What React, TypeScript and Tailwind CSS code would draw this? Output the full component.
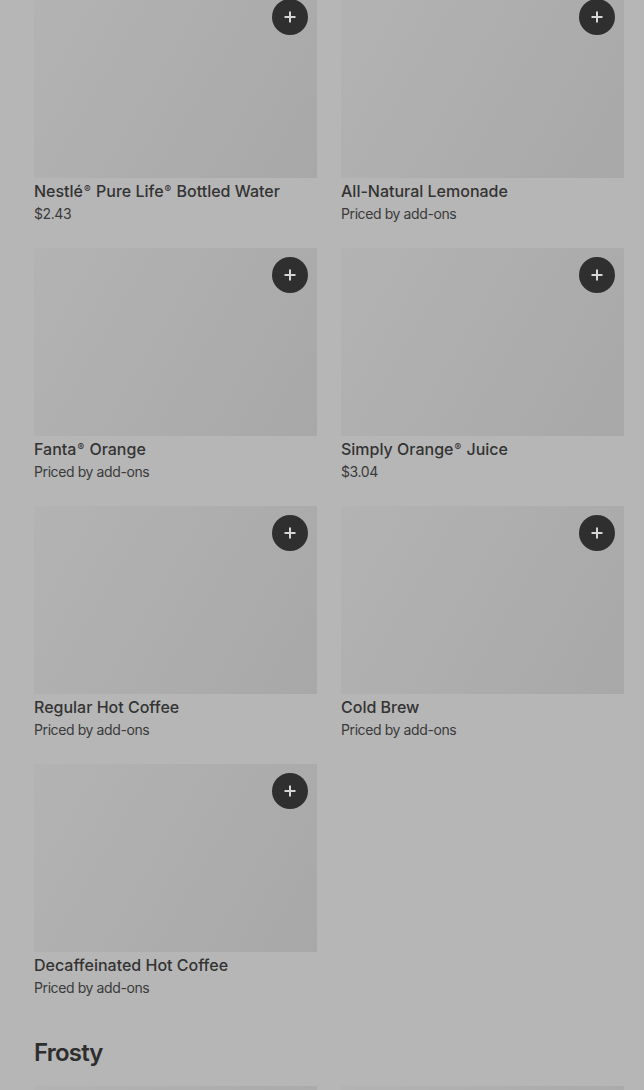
const items = [
  { name: "Nestlé® Pure Life® Bottled Water", price: "$2.43" },
  { name: "All-Natural Lemonade", price: "Priced by add-ons" },
  { name: "Fanta® Orange", price: "Priced by add-ons" },
  { name: "Simply Orange® Juice", price: "$3.04" },
  { name: "Regular Hot Coffee", price: "Priced by add-ons" },
  { name: "Cold Brew", price: "Priced by add-ons" },
  { name: "Decaffeinated Hot Coffee", price: "Priced by add-ons" },
];

function PlusButton() {
  return (
    <button className="absolute right-[9px] top-[9px] flex h-9 w-9 items-center justify-center rounded-full bg-[#2f2f2f] text-[#d6d6d6]">
      <svg width="14" height="14" viewBox="0 0 14 14" fill="none">
        <path d="M7 1.5v11M1.5 7h11" stroke="currentColor" strokeWidth="2" />
      </svg>
    </button>
  );
}

// small raised ® like the reference
function Name({ text }: { text: string }) {
  const parts = text.split("®");
  return (
    <>
      {parts.map((part, i) => (
        <span key={i}>
          {part}
          {i < parts.length - 1 && <span className="relative -top-[4px] px-[1px] text-[10px] leading-none">®</span>}
        </span>
      ))}
    </>
  );
}

function ItemCard({ name, price }: { name: string; price: string }) {
  return (
    <article className="pb-6">
      <div className="relative h-[188px] bg-[linear-gradient(120deg,#b3b3b3,#a8a8a8)]">
        <PlusButton />
      </div>
      <h3 className="mt-[3px] h-5 overflow-hidden text-base font-medium leading-5 tracking-normal text-[#333333]">
        <Name text={name} />
      </h3>
      <p className="mt-[3px] text-sm leading-5 tracking-[-0.4px] text-[#3a3a3a]">{price}</p>
    </article>
  );
}

export default function App() {
  return (
    <main className="h-[1090px] overflow-hidden bg-[#b6b6b6] pl-[34px] pr-5 font-['Inter','Roboto',sans-serif] tracking-[-0.1px]">
      <div className="-mt-[10px] grid grid-cols-2 gap-x-6">
        {items.map((item) => (
          <ItemCard key={item.name} {...item} />
        ))}
      </div>
      <h2 className="mt-[15px] text-2xl font-semibold leading-8 tracking-[-0.8px] text-[#2e2e2e]">Frosty</h2>
      <div className="mt-[17px] grid grid-cols-2 gap-x-6">
        <div className="h-[188px] bg-[linear-gradient(120deg,#b3b3b3,#a8a8a8)]" />
        <div className="h-[188px] bg-[linear-gradient(120deg,#b3b3b3,#a8a8a8)]" />
      </div>
    </main>
  );
}
